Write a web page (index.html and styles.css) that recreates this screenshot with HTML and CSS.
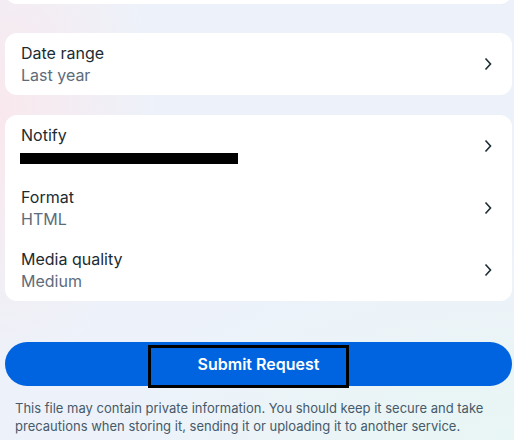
FILE: index.html
```html
<!DOCTYPE html>
<html lang="en">
<head>
    <meta charset="UTF-8">
    <meta name="viewport" content="width=device-width, initial-scale=1.0">
    <title>Download your information</title>
    <link rel="stylesheet" href="styles.css">
</head>
<body>
    <div class="page">
        <div class="card card-top"></div>

        <div class="card">
            <div class="row">
                <div class="row-text">
                    <div class="row-title">Date range</div>
                    <div class="row-value">Last year</div>
                </div>
                <svg class="chevron" viewBox="0 0 8 14"><path d="M1.5 1.5 L6.5 7 L1.5 12.5"/></svg>
            </div>
        </div>

        <div class="card">
            <div class="row">
                <div class="row-text">
                    <div class="row-title">Notify</div>
                    <div class="row-value"><span class="redacted"></span></div>
                </div>
                <svg class="chevron" viewBox="0 0 8 14"><path d="M1.5 1.5 L6.5 7 L1.5 12.5"/></svg>
            </div>
            <div class="row">
                <div class="row-text">
                    <div class="row-title">Format</div>
                    <div class="row-value">HTML</div>
                </div>
                <svg class="chevron" viewBox="0 0 8 14"><path d="M1.5 1.5 L6.5 7 L1.5 12.5"/></svg>
            </div>
            <div class="row">
                <div class="row-text">
                    <div class="row-title">Media quality</div>
                    <div class="row-value">Medium</div>
                </div>
                <svg class="chevron" viewBox="0 0 8 14"><path d="M1.5 1.5 L6.5 7 L1.5 12.5"/></svg>
            </div>
        </div>

        <button class="submit">Submit Request<span class="highlight"></span></button>

        <p class="note">This file may contain private information. You should keep it secure and take precautions when storing it, sending it or uploading it to another service.</p>
    </div>
</body>
</html>
```

FILE: styles.css
```css
html, body {
    margin: 0;
    height: 100%;
}

body {
    font-family: Inter, "Noto Sans", sans-serif;
    background:
        radial-gradient(ellipse 160px 260px at 0 120px, rgba(252, 230, 234, 0.8), transparent),
        radial-gradient(ellipse 420px 200px at 520px 440px, rgba(232, 246, 244, 1), transparent),
        #edf2fa;
    overflow: hidden;
}

.page {
    padding: 0 2px 0 5px;
}

.card {
    background: #fff;
    border-radius: 12px;
    margin-bottom: 20px;
}

.card-top {
    height: 24px;
    margin-top: -20px;
    margin-bottom: 29px;
}

.row {
    display: flex;
    align-items: center;
    justify-content: space-between;
    padding: 9px 20px 9px 16px;
    height: 44px;
}

.row-title {
    font-size: 16px;
    line-height: 22px;
    color: #1c2b33;
}

.row-value {
    font-size: 16px;
    line-height: 22px;
    color: #5d6c7b;
}

.redacted {
    display: inline-block;
    width: 218px;
    height: 11px;
    background: #000;
    vertical-align: middle;
    margin-left: -1px;
}

.chevron {
    width: 8px;
    height: 14px;
    fill: none;
    stroke: #1c2b33;
    stroke-width: 1.6;
}

.submit {
    position: relative;
    display: block;
    width: 100%;
    height: 44px;
    margin-top: 41px;
    border: none;
    border-radius: 22px;
    background: #0064e0;
    color: #fff;
    font-family: inherit;
    font-size: 16px;
    font-weight: 600;
}

.highlight {
    position: absolute;
    left: 143px;
    top: 3px;
    width: 195px;
    height: 37px;
    border: 3px solid #000;
}

.note {
    margin: 13px 0 0 10px;
    font-size: 13px;
    line-height: 18px;
    color: #465a69;
}
```
